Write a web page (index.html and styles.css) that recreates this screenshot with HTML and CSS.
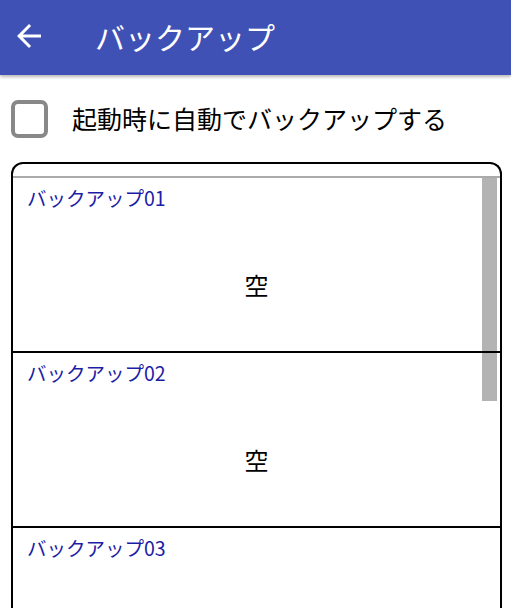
FILE: index.html
```html
<!DOCTYPE html>
<html lang="ja">
<head>
<meta charset="utf-8">
<title>バックアップ</title>
<link rel="stylesheet" href="styles.css">
</head>
<body>
<header class="appbar">
  <svg class="back" viewBox="0 0 24 24" width="36" height="36"><path d="M20 11H7.83l5.59-5.59L12 4l-8 8 8 8 1.41-1.41L7.83 13H20v-2z" fill="#fff"/></svg>
  <h1 class="title">バックアップ</h1>
</header>
<div class="option">
  <span class="checkbox"></span>
  <span class="option-label">起動時に自動でバックアップする</span>
</div>
<div class="list">
  <div class="scroll">
    <div class="scrollbar"></div>
    <div class="row">
      <div class="row-label">バックアップ01</div>
      <div class="row-body">空</div>
    </div>
    <div class="row">
      <div class="row-label">バックアップ02</div>
      <div class="row-body">空</div>
    </div>
    <div class="row row-last">
      <div class="row-label">バックアップ03</div>
    </div>
  </div>
</div>
</body>
</html>
```
FILE: styles.css
```css
html, body {
  margin: 0;
  padding: 0;
  background: #fff;
  overflow: hidden;
}
body {
  font-family: "Noto Sans CJK JP", "Noto Sans", sans-serif;
  color: #000;
  width: 511px;
  height: 608px;
}
.appbar {
  height: 75px;
  background: #3f51b5;
  box-shadow: 0 2px 3px rgba(0,0,0,0.28);
  display: flex;
  align-items: center;
  position: relative;
  z-index: 2;
}
.back {
  margin-left: 11px;
  margin-top: -4px;
  flex: none;
}
.title {
  margin: -4px 0 0 48px;
  font-size: 30px;
  font-weight: 400;
  color: #fff;
  line-height: 1;
}
.option {
  display: flex;
  align-items: center;
  height: 38px;
  margin-top: 25px;
  padding-left: 11px;
}
.checkbox {
  width: 29px;
  height: 30px;
  border: 4px solid #888;
  border-radius: 7px;
  flex: none;
}
.option-label {
  margin-left: 24px;
  font-size: 25px;
  line-height: 1;
  margin-top: -1px;
}
.list {
  margin: 24px 9px 0 11px;
  border: 2px solid #000;
  border-bottom: none;
  border-radius: 12px 12px 0 0;
  padding-top: 12px;
  height: 432px;
  overflow: hidden;
}
.scroll {
  position: relative;
  border-top: 2px solid #aaa;
}
.scrollbar {
  position: absolute;
  top: 0;
  right: 3px;
  width: 15px;
  height: 223px;
  background: #b3b3b3;
}
.row {
  position: relative;
  height: 173px;
  border-bottom: 2px solid #000;
}
.row-last {
  height: 80px;
  border-bottom: none;
}
.row-label {
  padding: 8px 0 0 14px;
  font-size: 19.5px;
  line-height: 24px;
  color: #1c1ca6;
}
.row-body {
  text-align: center;
  font-size: 24px;
  line-height: 1;
  margin-top: 63px;
}
```
